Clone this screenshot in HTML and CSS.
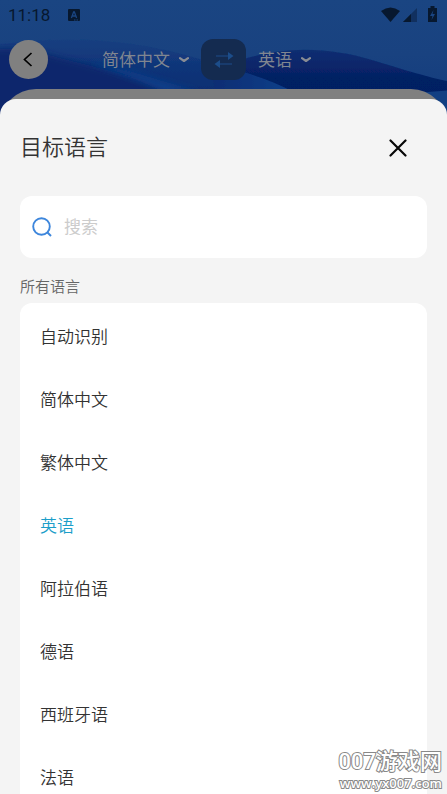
FILE: index.html
```html
<!DOCTYPE html>
<html lang="zh-CN">
<head>
<meta charset="utf-8">
<meta name="viewport" content="width=device-width, initial-scale=1">
<title>目标语言</title>
<link rel="stylesheet" href="styles.css">
</head>
<body>
<div class="app">
  <header class="top">
    <svg class="waves" viewBox="0 0 447 120" preserveAspectRatio="none" aria-hidden="true">
      <defs>
        <linearGradient id="sky" x1="0" y1="0" x2="0" y2="1"><stop offset="0" stop-color="#1a4582"/><stop offset=".45" stop-color="#194280"/><stop offset="1" stop-color="#123a7c"/></linearGradient>
        <linearGradient id="left" x1="0" y1="0" x2="0" y2="1"><stop offset="0" stop-color="#163f80"/><stop offset=".4" stop-color="#0e3277"/><stop offset="1" stop-color="#092665"/></linearGradient>
        <linearGradient id="hill" x1="0" y1="0" x2="0" y2="1"><stop offset="0" stop-color="#0c2e72"/><stop offset=".35" stop-color="#052064"/><stop offset="1" stop-color="#061e60"/></linearGradient>
        <linearGradient id="band" x1="0" y1="0" x2="1" y2="0"><stop offset="0" stop-color="#0b2c72"/><stop offset=".6" stop-color="#11408a"/><stop offset="1" stop-color="#0c3078"/></linearGradient>
        <filter id="soft"><feGaussianBlur stdDeviation="3"/></filter>
        <filter id="edge"><feGaussianBlur stdDeviation="0.6"/></filter>
      </defs>
      <rect width="447" height="120" fill="url(#sky)"/>
      <path d="M-10 46C50 36 110 38 160 49C190 55 225 66 250 78L300 130H-10Z" fill="url(#left)" filter="url(#edge)"/>
      <path d="M-10 50C20 46 40 52 60 58C110 70 150 82 200 95V130H-10Z" fill="#08286c" filter="url(#soft)"/>
      <path d="M90 62C125 68 155 80 200 92H165C140 80 115 72 90 62Z" fill="#11408a" filter="url(#soft)"/>
      <path d="M210 62C250 70 300 84 345 92H215Z" fill="url(#band)" filter="url(#edge)"/>
      <path d="M225 66C275 45 325 46 372 60C405 70 430 78 452 82V130H330C310 88 260 78 225 66Z" fill="url(#hill)" filter="url(#edge)"/>
      <path d="M415 93L452 90V130H415Z" fill="#123f82"/>
    </svg>
    <div class="status">
      <span class="time">11:18</span>
      <svg class="badge" viewBox="0 0 12 12" aria-hidden="true"><rect width="12" height="12" rx="1" fill="#07182f"/><path d="M3.4 9L5.6 3h.8L8.6 9M4.2 7h3.6" fill="none" stroke="#1a4582" stroke-width="1.3"/><path d="M6 11h4" stroke="#1a4582" stroke-dasharray="1 .5"/></svg>
      <svg class="signals" viewBox="0 0 58 18" aria-hidden="true"><path d="M0 5Q9.500 -2 19 5L9.500 16Z" fill="#07182f"/><path d="M22 16L36 2V16Z" fill="#11305f"/><path d="M22 16L30 8V16Z" fill="#07182f"/><path d="M47 2h2.500V0h4v2h2.500v14H47Z" fill="#07182f"/><path d="M52.500 4L49 10h2.500L50.500 14L54 8h-2.500Z" fill="#1a4582"/></svg>
    </div>
    <nav class="langs">
      <button class="back" aria-label="返回"><svg viewBox="0 0 39 39"><path d="M22.500 13L15.500 19.500L22.500 26" fill="none" stroke="#000" stroke-width="1.700"/></svg></button>
      <button class="pick source">简体中文<svg viewBox="0 0 10 6"><path d="M1 1.200L5 4L9 1.200" fill="none" stroke="#888c94" stroke-width="2.200" stroke-linecap="round" stroke-linejoin="round"/></svg></button>
      <button class="swap" aria-label="交换语言"><svg viewBox="0 0 20 16"><path d="M2 4H15M5 12H18" stroke="#1c4d8a" stroke-width="1.200"/><path d="M14 0L19.500 4L14 8ZM6 8L.5 12L6 16Z" fill="#1c4d8a"/></svg></button>
      <button class="pick">英语<svg viewBox="0 0 10 6"><path d="M1 1.200L5 4L9 1.200" fill="none" stroke="#888c94" stroke-width="2.200" stroke-linecap="round" stroke-linejoin="round"/></svg></button>
    </nav>
    <div class="under"></div>
  </header>
  <main class="sheet">
    <div class="title"><h1>目标语言</h1><button class="close" aria-label="关闭"><svg viewBox="0 0 18 18"><path d="M1.500 1.500L16.500 16.500M16.500 1.500L1.500 16.500" stroke="#080808" stroke-width="2.200" stroke-linecap="round"/></svg></button></div>
    <label class="search"><svg viewBox="0 0 20 20" aria-hidden="true"><circle cx="9.500" cy="9.500" r="8.300" fill="none" stroke="#3d86dc" stroke-width="1.900"/><path d="M15 15L19 19" stroke="#3d86dc" stroke-width="1.900"/></svg><input type="search" placeholder="搜索" aria-label="搜索"></label>
    <h2>所有语言</h2>
    <ul class="list">
      <li><button>自动识别</button></li>
      <li><button>简体中文</button></li>
      <li><button>繁体中文</button></li>
      <li><button class="on">英语</button></li>
      <li><button>阿拉伯语</button></li>
      <li><button>德语</button></li>
      <li><button>西班牙语</button></li>
      <li><button>法语</button></li>
    </ul>
  </main>
  <div class="mark"><span class="mark-name">007游戏网</span><span class="mark-url">www.yx007.com</span></div>
</div>
</body>
</html>
```
FILE: styles.css
```css
* { box-sizing: border-box; }
body { margin: 0; font-family: Roboto, "Noto Sans CJK SC", sans-serif; font-weight: 400; color: #333; background: #f4f4f4; }
button { border: 0; padding: 0; background: none; font: inherit; color: inherit; cursor: pointer; }
svg { display: block; flex: none; }
h1, h2, ul { margin: 0; padding: 0; font-weight: 350; }
.app { position: relative; height: 100vh; overflow: hidden; display: flex; flex-direction: column; }
.top { position: relative; flex: none; overflow: hidden; background: #1a4582; }
.waves { position: absolute; inset: 0; width: 100%; height: 120px; }
.status, .langs, .under { position: relative; }
.status { display: flex; align-items: center; height: 30px; padding: 0 8px; color: #07182f; }
.time { font-size: 17px; line-height: 20px; width: 60px; }
.badge { width: 12px; height: 12px; }
.signals { width: 58px; height: 18px; margin-left: auto; }
.langs { display: flex; align-items: center; height: 59px; padding: 0 9px; }
.back { width: 39px; height: 39px; border-radius: 50%; background: #808080; }
.back svg { width: 39px; height: 39px; }
.pick { display: flex; align-items: center; gap: 9px; font-size: 17px; line-height: 24px; color: #808690; }
.pick svg { width: 10px; height: 6px; }
.source { margin-left: 54px; }
.swap { display: grid; place-items: center; width: 45px; height: 41px; margin: 0 12px; border-radius: 12px; background: #142b50; }
.swap svg { width: 20px; height: 16px; }
.under { height: 40px; border-radius: 36px 36px 0 0; background: #808080; }
.sheet { position: relative; flex: 1; margin-top: -30px; padding: 0 20px; border-radius: 16px 16px 0 0; background: #f4f4f4; }
.title { display: flex; align-items: center; justify-content: space-between; height: 97px; padding-right: 20px; }
h1 { font-size: 22px; line-height: 32px; }
.close svg { width: 18px; height: 18px; }
.search { display: flex; align-items: center; gap: 12px; height: 62px; padding: 0 12px; border-radius: 12px; background: #fff; }
.search svg { width: 20px; height: 20px; }
.search input { flex: 1; min-width: 0; border: 0; padding: 0; outline: 0; background: none; font: inherit; font-size: 17px; }
.search input::placeholder { color: #ccc; }
h2 { margin: 18px 0 5px; font-size: 15px; line-height: 22px; color: #666; }
.list { list-style: none; padding-top: 1px; border-radius: 12px; background: #fff; }
.list button { display: block; width: 100%; height: 63px; padding: 0 20px; text-align: left; font-size: 17px; }
.list .on { color: #1c9ec9; }
.mark { position: absolute; right: 5px; bottom: 3px; display: flex; flex-direction: column; align-items: flex-end; color: #fff; -webkit-text-stroke: 2px #888; paint-order: stroke fill; }
.mark-name { font-size: 22px; line-height: 26px; font-weight: 500; }
.mark-url { font-family: "Open Sans", sans-serif; font-size: 13px; line-height: 16px; font-weight: 600; }
```
